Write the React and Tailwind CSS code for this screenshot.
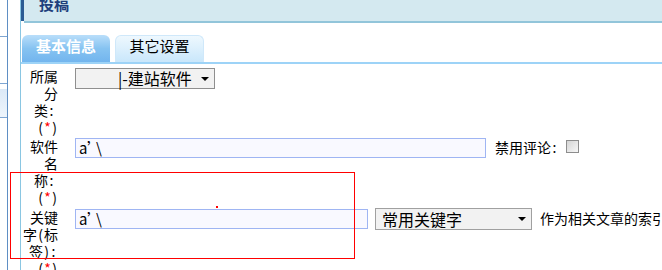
export default function App() {
  const font = { fontFamily: '"Noto Sans CJK SC", "Liberation Sans", sans-serif' };
  const Half = ({ children, w = "w-[7px]" }) => (
    <span className={`inline-block ${w} text-center`}>{children}</span>
  );
  const Star = () => (
    <span>
      <Half>(</Half>
      <Half><span className="text-[#ff0000]">*</span></Half>
      <Half>)</Half>
    </span>
  );
  const Label = ({ lines }) => (
    <div className="w-[36px] shrink-0 text-right text-[14px] leading-[17px] text-black">
      {lines.map((l, i) => (
        <div key={i} className="whitespace-nowrap">{l}</div>
      ))}
    </div>
  );
  const Arrow = () => (
    <svg width="8" height="4" viewBox="0 0 8 4" className="shrink-0">
      <path d="M0 0 L8 0 L4 4 Z" fill="#000" />
    </svg>
  );
  const Typed = () => (
    <span className="inline-flex text-[15px] leading-[18px]">
      <Half w="w-[8px]">a</Half>
      <Half w="w-[8px]">’</Half>
      <Half w="w-[8px]">\</Half>
    </span>
  );
  return (
    <div className="relative w-[662px] h-[270px] overflow-hidden bg-white flex items-start" style={font}>
      {/* left strip */}
      <div className="w-[8px] h-[270px] shrink-0 border-r border-[#5f8fc4] flex flex-col">
        <div className="h-[37px] shrink-0 border-b border-[#7fa6d2]" />
        <div className="h-[47px] shrink-0 border-b border-[#7fa6d2]" />
        <div className="h-[5px] shrink-0" />
        <div className="h-[29px] shrink-0 bg-gradient-to-b from-[#dbe9f7] to-[#eef5fc] border-b border-[#7fa6d2]" />
      </div>
      <div className="w-[12px] shrink-0" />
      {/* main */}
      <div className="flex-1 h-[270px] flex flex-col border-l border-[#8ac6e2] min-w-0">
        <div className="h-[23px] shrink-0 flex">
          <div className="w-[3px] h-[21px] bg-[#2b5b93] shrink-0" />
          <div className="flex-1 h-[23px] bg-[#d4e9f0] border-b-2 border-[#92c5da] pl-[15px] overflow-hidden">
            <div className="text-[15px] font-bold leading-[15px] text-[#1e3f7c] -mt-[4px]">投稿</div>
          </div>
        </div>
        <div className="h-[12px] shrink-0" />
        {/* tabs */}
        <div className="h-[29px] shrink-0 flex items-end pl-[1px] border-b-2 border-[#9dd3f7] gap-[5px]">
          <div className="w-[88px] h-[27px] rounded-t-[6px] bg-gradient-to-b from-[#b9defa] via-[#86c3f1] to-[#72b5ee] text-white font-bold text-[15px] leading-[20px] pt-[1px] text-center">
            基本信息
          </div>
          <div className="w-[89px] h-[27px] rounded-t-[6px] border border-b-0 border-[#cfe8fa] bg-gradient-to-b from-[#eef8fe] to-[#c9e7fb] text-black text-[15px] leading-[20px] text-center">
            其它设置
          </div>
        </div>
        {/* form */}
        <div className="pt-[4px] pl-[1px] flex flex-col shrink-0">
          <div className="h-[70px] shrink-0 flex">
            <Label lines={["所属", "分", <span className="pr-[3px]">类<Half>:</Half></span>, <Star />]} />
            <div className="w-[17px] shrink-0" />
            <div className="w-[140px] h-[21px] border border-[#8f8f8f] bg-[#f2f2f2] flex items-center pl-[42px] pr-[5px] text-[16px] leading-[19px]">
              <span className="flex-1 whitespace-nowrap">|-建站软件</span>
              <Arrow />
            </div>
          </div>
          <div className="h-[71px] shrink-0 flex">
            <Label lines={["软件", "名", <span className="pr-[3px]">称<Half>:</Half></span>, <Star />]} />
            <div className="w-[17px] shrink-0" />
            <div className="w-[411px] h-[20px] border border-[#9fb5f3] bg-[#f9f9ff] pl-[3px] flex items-center">
              <Typed />
            </div>
            <div className="ml-[9px] text-[14px] leading-[17px] pt-[1px] whitespace-nowrap">禁用评论<Half>:</Half></div>
            <div className="ml-[8px] mt-[2px] w-[13px] h-[13px] border border-[#8d8d8d] bg-gradient-to-br from-[#d5d5d5] to-[#f7f7f7]" />
          </div>
          <div className="flex shrink-0">
            <Label lines={["关键", <span>字<Half>(</Half>标</span>, <span className="pr-[1px]">签<Half>)</Half><Half>:</Half></span>, <Star />]} />
            <div className="w-[17px] shrink-0" />
            <div className="w-[293px] h-[20px] border border-[#9fb5f3] bg-[#f9f9ff] pl-[3px] shrink-0 flex items-center">
              <Typed />
            </div>
            <div className="ml-[7px] -mt-[1px] w-[157px] h-[22px] border border-[#a0a0a0] bg-[#f2f2f2] flex items-center pl-[6px] pr-[5px] text-[16px] leading-[19px] shrink-0">
              <span className="flex-1 whitespace-nowrap">常用关键字</span>
              <Arrow />
            </div>
            <div className="ml-[8px] text-[14px] leading-[17px] whitespace-nowrap pt-[1px]">作为相关文章的索引</div>
          </div>
        </div>
      </div>
      {/* red annotation box */}
      <div className="absolute left-[10px] top-[172px] w-[345px] h-[87px] border border-[#ff0000]" />
      <div className="absolute left-[216px] top-[206px] w-[2px] h-[2px] bg-[#ff0000]" />
    </div>
  );
}
